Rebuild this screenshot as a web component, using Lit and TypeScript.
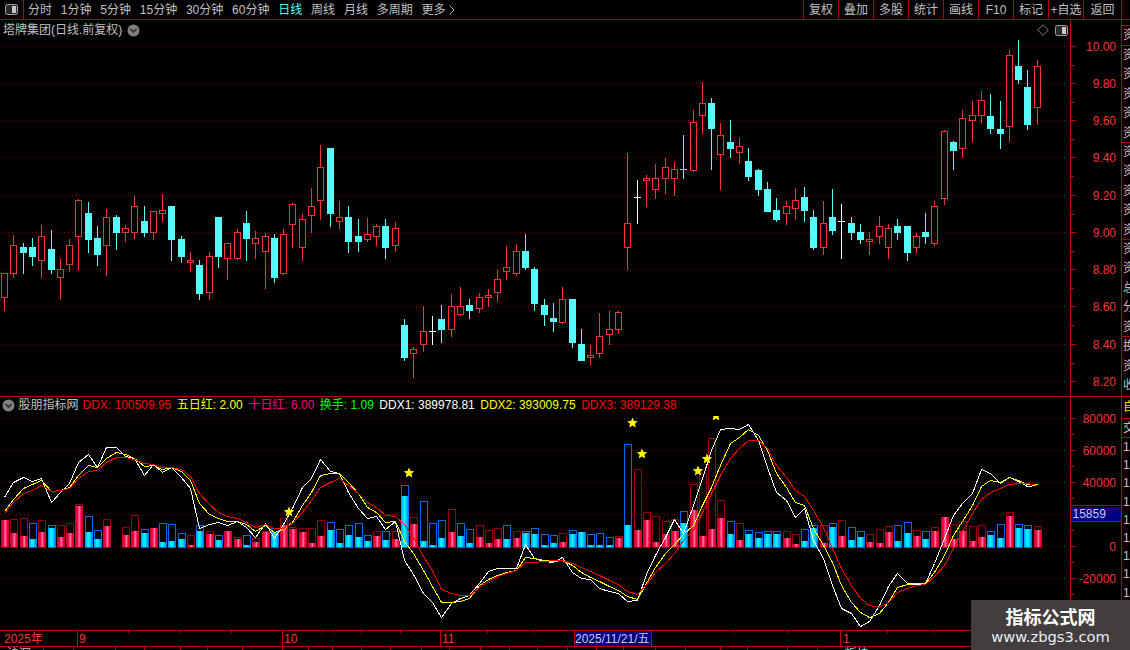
import { LitElement, html, css, svg } from "lit";
import { customElement } from "lit/decorators.js";

const XS = [4,13,23,32,41,51,60,69,78,88,97,106,116,125,134,144,153,162,171,181,190,199,209,218,227,237,246,255,265,274,283,292,302,311,320,330,339,348,358,367,376,385,395,404,413,423,432,441,451,460,469,479,488,497,506,516,525,534,544,553,562,572,581,590,599,609,618,627,637,646,655,665,674,683,693,702,711,720,730,739,748,758,767,776,786,795,804,813,823,832,841,851,860,869,879,888,897,907,916,925,934,944,953,962,972,981,990,1000,1009,1018,1027,1037];

type C = [string, number, number, number, number];
const CANDLES: C[] = [
["r",273,273,297,310],["r",235,245,273,277],["c",243,247,252,273],["c",238,247,256,265],["r",225,236,260,277],["c",230,249,269,273],["r",259,269,277,299],["r",239,245,264,271],["r",199,200,236,269],["c",202,213,239,252],
["c",226,238,254,265],["r",209,217,245,275],["c",215,217,232,249],["r",225,228,232,241],["r",196,206,232,238],["c",206,221,232,236],["r",211,211,232,239],["r",194,210,213,221],["c",206,206,239,260],["c",236,239,256,262],
["r",252,260,262,271],["c",260,265,293,299],["r",252,256,292,299],["c",217,217,256,267],["r",243,243,258,279],["r",229,232,258,259],["c",211,223,238,260],["r",231,238,243,258],["r",233,236,251,288],["c",234,238,277,282],
["r",229,234,273,274],["r",203,204,224,247],["r",214,219,247,260],["r",188,206,215,232],["r",145,167,200,219],["c",148,148,213,226],["r",201,217,221,228],["c",206,217,241,252],["c",219,236,241,251],["r",218,234,239,241],
["r",224,226,236,245],["c",219,226,247,258],["r",222,228,245,251],["c",319,325,357,360],["r",347,349,353,377],["r",306,331,344,351],["w",316,331,331,344],["c",305,319,329,342],["r",294,306,329,336],["r",287,306,314,315],
["c",299,305,310,318],["r",293,297,308,312],["r",289,295,297,306],["r",270,279,292,301],["r",246,267,271,279],["r",244,251,273,275],["c",234,251,267,269],["c",267,269,303,310],["c",299,305,314,325],["c",303,318,321,331],
["r",287,299,322,323],["c",299,299,342,347],["c",329,344,360,360],["r",345,355,357,364],["r",313,336,353,357],["r",311,329,334,344],["r",311,312,329,333],["r",153,223,247,269],["w",180,197,197,223],["r",175,178,180,206],
["r",164,178,189,198],["r",158,167,178,193],["r",162,169,178,195],["k",135,169,169,178],["r",110,122,170,171],["r",82,103,115,133],["c",98,103,128,169],["r",123,135,154,189],["c",120,142,148,157],["r",138,146,152,163],
["c",148,161,176,180],["c",169,170,189,195],["c",182,189,211,211],["c",198,210,219,221],["r",201,206,213,224],["r",188,200,208,219],["c",187,197,210,221],["c",210,217,247,249],["r",201,223,247,254],["c",189,217,230,234],
["w",204,221,221,258],["c",217,223,232,239],["c",224,232,239,243],["r",232,239,241,254],["r",216,226,236,243],["r",224,228,247,258],["c",219,226,232,239],["c",226,226,252,260],["r",233,236,247,252],["c",213,232,236,243],
["r",201,206,243,245],["r",130,131,198,204],["c",141,142,150,169],["r",110,118,148,157],["r",101,115,120,141],["r",91,100,115,122],["c",94,116,128,133],["c",101,129,133,148],["r",50,55,126,141],["c",40,66,79,83],
["c",70,87,124,129],["r",60,66,107,124],
];

// bars: [colour, outline top, fill top] in sub-panel offsets (page y = 390 + v/3)
const BARS: ([string, number, number] | null)[] = [
["r",390,390],["r",388,429],["r",385,438],["b",400,447],["r",391,426],["b",406,414],["r",406,441],["r",400,429],["r",343,348],["b",379,426],
["b",421,447],["r",388,408],null,["r",411,435],["r",376,423],["b",418,429],["r",414,414],["b",400,456],["b",403,453],["b",430,447],
["r",436,465],["b",406,423],["r",424,432],["b",436,450],["r",423,423],["r",442,447],["b",436,465],["r",445,456],["r",423,426],["b",415,426],
["r",385,406],["r",411,417],["r",415,426],["r",415,459],["r",391,438],["b",397,420],["b",418,459],["b",406,435],["b",400,441],["b",436,453],
["r",424,438],["b",424,450],["r",424,447],["b",286,318],["r",382,402],["b",334,453],["b",400,465],["b",391,444],["r",358,426],["b",400,438],
["b",418,459],["r",406,441],["r",421,459],["r",415,447],["b",406,447],["r",424,444],["b",424,429],["b",415,432],["b",433,465],["b",436,459],
["r",430,456],["b",421,432],["b",426,426],["b",433,465],["b",430,465],["b",442,465],["r",439,444],["b",163,405],["r",238,420],["r",367,390],
["r",379,456],["r",394,432],["r",388,423],["b",364,400],["r",283,360],["r",250,438],["r",145,417],["r",331,384],["b",394,432],["r",400,450],
["b",421,432],["b",427,444],["b",423,432],["b",424,432],["r",424,444],["r",433,462],["b",418,453],["b",406,415],["r",406,459],["b",400,411],
["r",391,438],["b",412,450],["b",424,441],["r",433,456],["r",418,459],["r",409,426],["b",406,453],["b",397,429],["r",421,438],["b",424,447],
["r",412,423],["r",382,382],["r",403,447],["r",394,423],["r",409,453],["r",406,441],["b",424,435],["b",403,444],["r",367,378],["b",403,414],
["b",406,417],["r",409,420],
];

const z = (a: number[]) => a.map((v) => 390 + v / 3);
const WHITE = [...z([320,275,262,272,263,337,305,280,215,193,230,172,172,198,205,256,223,247,230,262,295,414,403,397,406,394,412,442,398,445,403,355,292,265,208,243,248,305,355,385,378]),
529,521,560,574,593,602,617,603,598,595,583,571,568,568,568,544,558,561,562,557,572,578,579,588,591,593,601,600,574,555,537,519,533,505,478,450,429,428,429,424,440,467,492,500,517,508,540,558,585,608,613,626,621,605,586,573,583,584,583,563,538,515,503,493,469,473,483,477,481,486,485];
const YELLOW = [...z([362,327,295,282,270,303,300,292,255,224,230,205,187,193,203,229,224,236,232,242,270,340,372,385,393,393,403,422,405,427,418,395,345,305,255,250,248,275,310,350,367]),
522,521,541,553,570,586,602,602,601,598,585,579,575,572,570,557,558,560,561,560,565,572,577,581,586,590,596,599,583,567,553,544,534,525,505,487,465,443,437,429,435,450,473,487,502,505,528,545,562,585,602,612,617,613,602,587,584,583,583,572,555,535,521,505,486,480,482,477,480,484,484];
const RED_L = [...z([370,335,310,300,285,303,300,295,265,243,240,215,202,202,207,220,222,230,230,238,258,310,343,365,377,383,395,410,403,415,413,400,365,330,290,275,265,285,310,335,350]),
515,516,524,537,556,570,589,593,595,595,587,581,576,573,570,562,562,561,560,560,563,567,571,575,580,584,591,594,584,572,563,553,540,530,512,493,475,458,448,440,440,448,465,477,490,496,510,527,548,568,585,598,605,607,602,592,588,585,584,576,565,548,531,513,499,492,488,484,483,483,485];

const PRICES: [string, number][] = [["10.00",46],["9.80",83],["9.60",120],["9.40",157],["9.20",195],["9.00",232],["8.80",269],["8.60",306],["8.40",344],["8.20",381]];
const SUBS: [string, number][] = [["80000",418],["60000",450],["40000",482],["",514],["0",546],["-20000",578]];
const STARS: [number, number][] = [[289,512],[409,473],[632.5,423],[642,454],[698,471],[707,459],[716,416]];
const AX_TICKS = [128,180,231,333,322,361,400,487,533,733,787,887,933];
const AX_MAJOR = [77,282,440,840];
const TAB_LINES = [43,73,115,144,180,207,242,282,308,332,361,390,421,449,480,509,537,567,596,623,655,685,720,747,787,817,845];

const LEFT_ITEMS = ["分时","1分钟","5分钟","15分钟","30分钟","60分钟","日线","周线","月线","多周期"];
const RIGHT_ITEMS = ["复权","叠加","多股","统计","画线","F10","标记","+自选","返回"];
const SIDE: { h: number; lh: number; t: string; cls?: string }[] = [
  { h: 5, lh: 5, t: "" },
  { h: 19, lh: 19, t: "资" },
  { h: 96, lh: 19.4, t: "资资资资资" },
  { h: 96, lh: 19.4, t: "资资资资资" },
  { h: 96, lh: 19.4, t: "资资总分资" },
  { h: 59, lh: 19.6, t: "换资收" },
  { h: 21, lh: 21, t: "自", cls: "yl" },
  { h: 18, lh: 18, t: "交" },
  { h: 192, lh: 18.2, t: "1111111111" },
];

const star = (cx: number, cy: number, r = 5.6) => {
  const p: string[] = [];
  for (let i = 0; i < 10; i++) {
    const rr = i % 2 ? r * 0.46 : r;
    const a = -Math.PI / 2 + (i * Math.PI) / 5;
    p.push(`${(cx + rr * Math.cos(a)).toFixed(1)},${(cy + rr * Math.sin(a)).toFixed(1)}`);
  }
  return p.join(" ");
};

const panelIcon = () => html`<svg class="pic" width="13" height="11" viewBox="0 0 13 11">
  <rect x="0.5" y="0.5" width="12" height="10" rx="2" fill="#2a2a2a" stroke="#a0a0a0"></rect>
  <rect x="7" y="2" width="4" height="7" fill="#c8c8c8"></rect>
</svg>`;

const chevron = () => html`<svg class="chev" width="13" height="13" viewBox="0 0 13 13">
  <circle cx="6.5" cy="6.5" r="6" fill="#808080"></circle>
  <path d="M3.5 5l3 3 3-3" fill="none" stroke="#2a2a2a" stroke-width="1.6"></path>
</svg>`;

@customElement("app-root")
export class AppRoot extends LitElement {
  static styles = css`
    :host { display: block; position: relative; width: 1130px; height: 650px; overflow: hidden; background: #000;
      font-family: "Liberation Sans", "Noto Sans CJK SC", sans-serif; font-size: 12px; color: #c0c0c0; }
    .toolbar { display: flex; height: 19px; border-bottom: 1px solid #b00000; align-items: center; box-sizing: content-box; }
    .icell { width: 22px; height: 19px; border-right: 1px solid #b00000; display: flex; align-items: center; justify-content: center; padding-right: 1px; box-sizing: content-box; }
    .litems { display: flex; gap: 8.8px; padding-left: 4px; flex: 1; line-height: 20px; }
    .cy { color: #54fcfc; }
    .more { display: flex; align-items: center; gap: 3px; }
    .ritems { display: flex; margin-right: 8px; }
    .rbtn { width: 34px; height: 19px; line-height: 20px; text-align: center; border-left: 1px solid #b00000; white-space: nowrap; }
    .rbtn:last-child { width: 37px; border-right: 1px solid #b00000; }
    .row { display: flex; height: 610px; }
    .charts { width: 1121px; display: flex; flex-direction: column; }
    .main { position: relative; height: 376px; border-bottom: 1px solid #c00000; }
    .sub { position: relative; height: 233px; }
    svg.chart { display: block; }
    .title { position: absolute; left: 3px; top: 3px; display: flex; align-items: center; gap: 5px; line-height: 14px; }
    .tools { position: absolute; left: 1037px; top: 4px; display: flex; align-items: center; gap: 6px; }
    .legend { position: absolute; left: 2px; top: 1px; display: flex; align-items: center; gap: 5.5px; line-height: 15px; white-space: nowrap; }
    .legend .name { margin-left: -2px; margin-right: -1.5px; }
    .side { width: 8px; border-left: 1px solid #b00000; overflow: hidden; }
    .cell { box-sizing: content-box; border-bottom: 1px solid #b00000; overflow: hidden; padding-left: 1px; word-break: break-all; white-space: normal; width: 12px; }
    .cell.last { border-bottom: none; }
    .yl { color: #e8e800; }
    .axis { display: block; }
    .mark { position: absolute; left: 971px; top: 600px; width: 159px; height: 50px; background: #433d3d; display: flex; flex-direction: column; align-items: center; justify-content: center; color: #fff; }
    .mark b { font-family: "Noto Sans CJK SC", sans-serif; font-size: 18px; line-height: 24px; font-weight: 700; }
    .mark span { font-family: "DejaVu Sans", sans-serif; font-size: 14.7px; line-height: 18px; color: #e8eef8; }
    .axt { font-size: 12px; fill: #ff3232; }
    .lbl { font-size: 12px; fill: #ff3232; text-anchor: end; }
    .box { font-size: 12px; fill: #c8c8ff; }
    .tab { font-size: 12px; fill: #c0c0c0; }
  `;

  private grid(ys: number[]) {
    return ys.map((y) => svg`<line x1="0" x2="1068" y1=${y + 0.5} y2=${y + 0.5} stroke="#7c0000" stroke-dasharray="1 3"></line>`);
  }

  private candles() {
    const COL: Record<string, string> = { r: "#ff3232", c: "#54fcfc", w: "#ffffff", k: "#54fcfc" };
    return CANDLES.map((c, i) => {
      const [t, hi, top, bot, lo] = c;
      const x = XS[i];
      const col = COL[t];
      const wicks = svg`
        ${hi < top ? svg`<rect x=${x} y=${hi} width="1" height=${top - hi} fill=${col}></rect>` : ""}
        ${lo > bot ? svg`<rect x=${x} y=${bot} width="1" height=${lo - bot + 1} fill=${col}></rect>` : ""}`;
      if (t === "r") {
        return svg`${wicks}<rect x=${x - 2.5} y=${top + 0.5} width="6" height=${bot - top} fill="#000" stroke=${col}></rect>`;
      }
      if (t === "c") {
        return svg`${wicks}<rect x=${x - 3} y=${top} width="7" height=${bot - top + 1} fill=${col}></rect>`;
      }
      return svg`${wicks}<rect x=${x - 3} y=${top} width="7" height="1" fill=${col}></rect>`;
    });
  }

  private bars() {
    return BARS.map((b, i) => {
      if (!b) return "";
      const [k, oz, fz] = b;
      const x = XS[i] - 3;
      const oy = Math.round(390 + oz / 3);
      const fy = Math.round(390 + fz / 3);
      const base = 547;
      const stroke = k === "r" ? "#960000" : "#0068f0";
      return svg`
        <rect x=${x + 0.5} y=${oy + 0.5} width="7" height=${base - oy - 0.5} fill="none" stroke=${stroke}></rect>
        <rect x=${x} y=${fy} width="8" height=${base - fy} fill=${k === "r" ? "url(#gr)" : "url(#gb)"}></rect>`;
    });
  }

  private line(vals: number[], col: string) {
    const pts = vals.map((v, i) => `${XS[i] + 0.5},${Math.round(v) + 0.5}`).join(" ");
    return svg`<polyline points=${pts} fill="none" stroke=${col} stroke-width="1"></polyline>`;
  }

  private ticks(list: [string, number][], minorStep: number) {
    return list.map(([, y]) => svg`
      <rect x="1071" y=${y} width="5" height="1" fill="#c00000"></rect>
      <rect x="1071" y=${y + minorStep} width="3" height="1" fill="#c00000"></rect>`);
  }

  render() {
    return html`
      <div class="toolbar">
        <div class="icell">${panelIcon()}</div>
        <div class="litems">
          ${LEFT_ITEMS.map((t) => html`<span class=${t === "日线" ? "cy" : ""}>${t}</span>`)}
          <span class="more">更多
            <svg width="6" height="10" viewBox="0 0 6 10"><path d="M0.5 0.5l4.5 4.5-4.5 4.5" fill="none" stroke="#c0c0c0"></path></svg>
          </span>
        </div>
        <div class="ritems">${RIGHT_ITEMS.map((t) => html`<div class="rbtn">${t}</div>`)}</div>
      </div>
      <div class="row">
        <div class="charts">
          <div class="main">
            <svg class="chart" width="1121" height="376" viewBox="0 20 1121 376" shape-rendering="crispEdges">
              ${this.grid(PRICES.map((p) => p[1]))}
              ${this.candles()}
              <rect x="1070" y="20" width="1" height="376" fill="#c00000"></rect>
              ${this.ticks(PRICES, 18.5)}
              ${PRICES.map(([t, y]) => svg`<text class="lbl" x="1116" y=${y + 5}>${t}</text>`)}
            </svg>
            <div class="title"><span>塔牌集团(日线.前复权)</span>${chevron()}</div>
            <div class="tools">
              <svg width="12" height="12" viewBox="0 0 12 12"><path d="M6 0.7L11.3 6 6 11.3 0.7 6z" fill="none" stroke="#808080"></path></svg>
              ${panelIcon()}
            </div>
          </div>
          <div class="sub">
            <svg class="chart" width="1121" height="233" viewBox="0 397 1121 233" shape-rendering="crispEdges">
              <defs>
                <linearGradient id="gr" x1="0" x2="1" y1="0" y2="0">
                  <stop offset="0" stop-color="#c80028"></stop><stop offset="0.3" stop-color="#f80040"></stop><stop offset="0.55" stop-color="#ff78a8"></stop><stop offset="0.75" stop-color="#f80040"></stop><stop offset="1" stop-color="#c80028"></stop>
                </linearGradient>
                <linearGradient id="gb" x1="0" x2="1" y1="0" y2="0">
                  <stop offset="0" stop-color="#0090ff"></stop><stop offset="0.4" stop-color="#00ffff"></stop><stop offset="0.7" stop-color="#00c0ff"></stop><stop offset="1" stop-color="#0060f0"></stop>
                </linearGradient>
                <clipPath id="sc"><rect x="0" y="416" width="1070" height="214"></rect></clipPath>
              </defs>
              ${this.grid(SUBS.map((s) => s[1]))}
              ${this.bars()}
              ${this.line(WHITE, "#ffffff")}
              ${this.line(YELLOW, "#ffff00")}
              ${this.line(RED_L, "#ff0000")}
              <g clip-path="url(#sc)" shape-rendering="auto">
                ${STARS.map(([x, y]) => svg`<polygon points=${star(x, y)} fill="#ffff00"></polygon>`)}
              </g>
              <rect x="1070" y="397" width="1" height="233" fill="#c00000"></rect>
              ${this.ticks(SUBS, 16)}
              ${SUBS.map(([t, y]) => (t ? svg`<text class="lbl" x="1116" y=${y + 5}>${t}</text>` : ""))}
              <rect x="1071" y="506.5" width="50" height="14" fill="#000080"></rect>
              <rect x="1071" y="505" width="50" height="1" fill="#c00000"></rect>
              <rect x="1071" y="521" width="50" height="1" fill="#c00000"></rect>
              <text class="box" x="1072.5" y="518">15859</text>
            </svg>
            <div class="legend">
              ${chevron()}
              <span class="name">股朋指标网</span>
              <span style="color:#ff0000">DDX: 100509.95</span>
              <span style="color:#ffff00">五日红: 2.00</span>
              <span style="color:#ff0080">十日红: 6.00</span>
              <span style="color:#00ff00">换手: 1.09</span>
              <span style="color:#ffffff">DDX1: 389978.81</span>
              <span style="color:#ffff00">DDX2: 393009.75</span>
              <span style="color:#ff0000">DDX3: 389129.38</span>
            </div>
          </div>
        </div>
        <div class="side">
          ${SIDE.map((c, i) => html`<div class="cell ${c.cls ?? ""} ${i === SIDE.length - 1 ? "last" : ""}" style="height:${c.h}px;line-height:${c.lh}px">${c.t}</div>`)}
        </div>
      </div>
      <svg class="axis" width="1130" height="20" viewBox="0 630 1130 20" shape-rendering="crispEdges">
        <rect x="0" y="630" width="1130" height="1" fill="#c00000"></rect>
        <rect x="0" y="646" width="1130" height="1" fill="#c00000"></rect>
        ${AX_TICKS.map((x) => svg`<rect x=${x} y="631" width="1" height="2" fill="#c00000"></rect>`)}
        ${AX_MAJOR.map((x) => svg`<rect x=${x} y="631" width="1" height="15" fill="#c00000"></rect>`)}
        ${TAB_LINES.map((x) => svg`<rect x=${x} y="647" width="1" height="3" fill="#a00000"></rect>`)}
        <text class="axt" x="4" y="643">2025年</text>
        <text class="axt" x="79" y="643">9</text>
        <text class="axt" x="284" y="643">10</text>
        <text class="axt" x="442" y="643">11</text>
        <text class="axt" x="843" y="643">1</text>
        <rect x="574" y="631" width="78" height="15" fill="#000080"></rect>
        <rect x="574" y="631" width="1" height="15" fill="#c00000"></rect>
        <rect x="651" y="631" width="1" height="15" fill="#c00000"></rect>
        <text class="box" x="575" y="643">2025/11/21/五</text>
        <text class="tab" x="7" y="658">沪深</text>
        <text class="tab" x="845" y="658" style="fill:#54fcfc">板块</text>
      </svg>
      <div class="mark"><b>指标公式网</b><span>www.zbgs3.com</span></div>
    `;
  }
}
